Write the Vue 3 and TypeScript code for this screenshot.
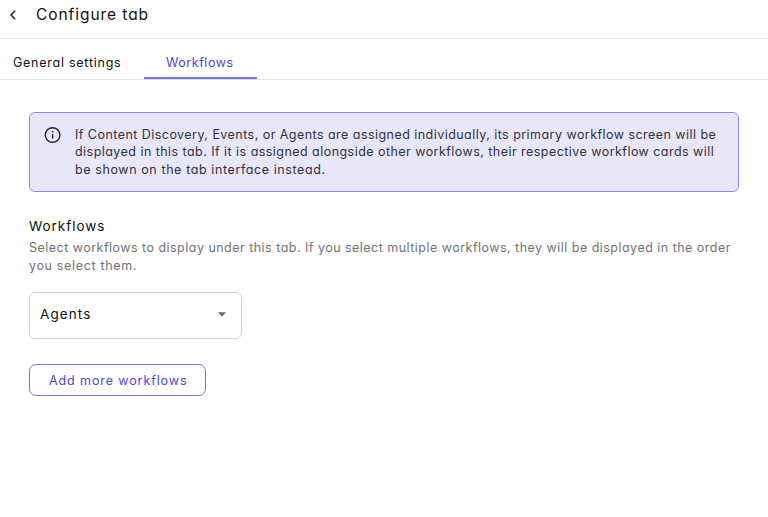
<script setup lang="ts">
import { ref } from 'vue'

interface Tab {
  id: string
  label: string
}

const tabs: Tab[] = [
  { id: 'general', label: 'General settings' },
  { id: 'workflows', label: 'Workflows' },
]
const activeTab = ref<string>('workflows')
const selected = ref<string>('Agents')
</script>

<template>
  <main class="page">
    <header class="header">
      <button class="back" aria-label="Back">
        <svg width="8" height="12" viewBox="0 0 8 12" fill="none" stroke="#222" stroke-width="1.5">
          <path d="M6.2 1.7 2 6l4.2 4.3" />
        </svg>
      </button>
      <h1 class="title">Configure tab</h1>
    </header>
    <nav class="tabs">
      <button
        v-for="tab in tabs"
        :key="tab.id"
        :class="['tab', tab.id, { active: tab.id === activeTab }]"
        @click="activeTab = tab.id"
      >{{ tab.label }}</button>
    </nav>
    <section class="content">
      <div class="notice">
        <svg class="info" width="18" height="18" viewBox="0 0 18 18" fill="none" stroke="#25242e" stroke-width="1.4">
          <circle cx="8.6" cy="9" r="7.3" />
          <path d="M8.6 8v4.6M8.6 5.1v1.5" />
        </svg>
        <p class="notice-text">
          <span class="n1">If Content Discovery, Events, or Agents are assigned individually, its primary workflow screen will be</span><br>
          <span class="n2">displayed in this tab. If it is assigned alongside other workflows, their respective workflow cards will</span><br>
          <span class="n3">be shown on the tab interface instead.</span>
        </p>
      </div>
      <h2 class="heading">Workflows</h2>
      <p class="description">
        <span class="d1">Select workflows to display under this tab. If you select multiple workflows, they will be displayed in the order</span><br>
        <span class="d2">you select them.</span>
      </p>
      <button class="select">
        <span>{{ selected }}</span>
        <svg width="8" height="5" viewBox="0 0 8 5"><path d="M0 .3h8L4 4.6z" fill="#666" /></svg>
      </button>
      <button class="add"><span>Add more workflows</span></button>
    </section>
  </main>
</template>

<style>
body {
  background: #fff;
}
</style>

<style scoped>
.page {
  box-sizing: border-box;
  height: 517px;
  overflow: hidden;
  color: #111;
  font-family: Inter, 'Open Sans', sans-serif;
  font-feature-settings: 'cv11';
  font-size: 12.5px;
  white-space: nowrap;
}
button {
  box-sizing: border-box;
  margin: 0;
  padding: 0;
  border: 0;
  background: none;
  color: inherit;
  font: inherit;
  font-feature-settings: inherit;
  text-align: left;
}
h1, h2, p {
  margin: 0;
  font-weight: 400;
}
.header {
  box-sizing: border-box;
  display: flex;
  height: 38.5px;
  padding-left: 9px;
  border-bottom: 1px solid #e7e7e7;
}
.back {
  display: flex;
  width: 27px;
  height: 30px;
  align-items: center;
}
.title {
  font-size: 15.5px;
  line-height: 30px;
  letter-spacing: 0.94px;
}
.tabs {
  box-sizing: border-box;
  display: flex;
  height: 41px;
  border-bottom: 1px solid #e2e2e2;
}
.tab {
  height: 40px;
  padding-top: 9px;
  border-bottom: 2px solid transparent;
}
.general {
  width: 144px;
  padding-left: 13px;
  letter-spacing: 0.75px;
}
.workflows {
  width: 113px;
  padding-left: 22px;
  letter-spacing: 0.55px;
}
.active {
  border-bottom-color: #7a73e6;
  color: #5046d6;
}
.content {
  display: flex;
  flex-direction: column;
  align-items: flex-start;
  padding: 32px 29px 0;
}
.notice {
  box-sizing: border-box;
  display: flex;
  width: 709.5px;
  height: 80px;
  padding: 13.5px 14px;
  border: 1px solid #8f89ea;
  border-radius: 6px;
  background: #e8e6f9;
  color: #33323c;
}
.info {
  width: 18px;
  margin-right: 13px;
}
.notice-text {
  line-height: 17.4px;
}
.n1 {
  letter-spacing: 0.456px;
}
.n2 {
  letter-spacing: 0.455px;
}
.n3 {
  letter-spacing: 0.6px;
}
.heading {
  margin-top: 24px;
  font-size: 13.5px;
  line-height: 20px;
  letter-spacing: 0.95px;
}
.description {
  margin-top: 3px;
  line-height: 18px;
  color: #737373;
}
.d1 {
  letter-spacing: 0.477px;
}
.d2 {
  letter-spacing: 0.66px;
}
.select {
  display: flex;
  width: 213px;
  height: 47px;
  margin-top: 17.5px;
  padding: 0 15px 3px 10px;
  align-items: center;
  justify-content: space-between;
  border: 1px solid #d2d2d2;
  border-radius: 6px;
  font-size: 13.5px;
  letter-spacing: 1.1px;
}
.select svg {
  margin-top: 1px;
}
.add {
  width: 177px;
  height: 32px;
  margin-top: 25px;
  padding-left: 19px;
  border: 1px solid #7b74e8;
  border-radius: 7px;
  color: #5046d6;
  letter-spacing: 0.9px;
}
</style>
